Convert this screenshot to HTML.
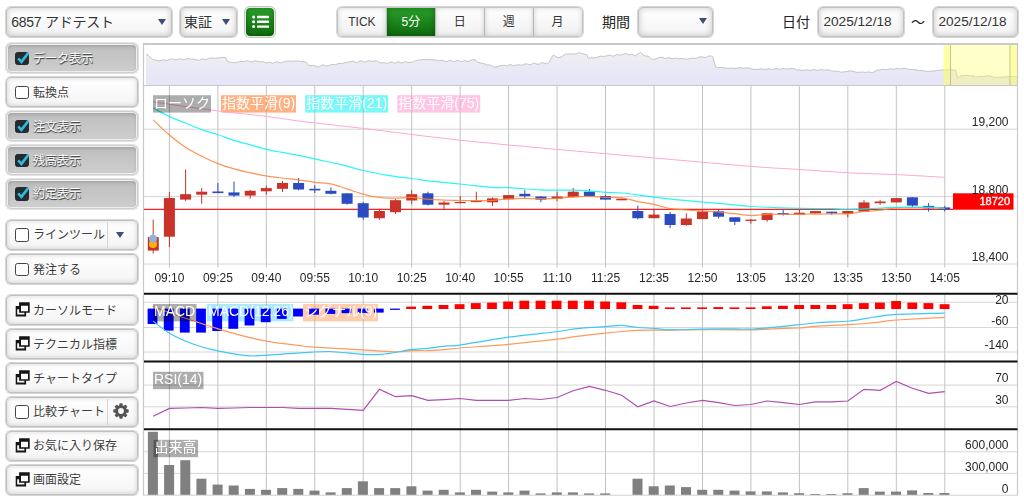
<!DOCTYPE html><html lang="ja"><head><meta charset="utf-8"><title>チャート</title><style>
html,body{margin:0;padding:0;background:#fff}
body{width:1024px;height:499px;position:relative;overflow:hidden;font-family:"Liberation Sans","Noto Sans CJK JP",sans-serif;color:#333;font-size:14px}
.bx{position:absolute;box-sizing:border-box;border:1px solid #c0c0c0;border-radius:5px;background:linear-gradient(#ffffff,#f4f4f4);box-shadow:0 0 0 1px #d6d6d6,inset 0 0 5px rgba(0,0,0,.17);text-shadow:0 1px 0 #fff;white-space:nowrap}
.top{top:7px;height:30px;line-height:28px;font-size:14px;box-shadow:0 0 0 1px #d6d6d6,inset 0 0 6px rgba(0,0,0,.22)}
.arr{position:absolute;width:0;height:0;border-left:4.5px solid transparent;border-right:4.5px solid transparent;border-top:6px solid #3c4f76;top:11px}
.lbl{position:absolute;top:6.5px;line-height:30px;font-size:14px;color:#222}
.sb{left:6px;width:131.5px;height:30px;line-height:28px;font-size:12px;color:#3c3c3c}
.sb .t{position:absolute;left:26px;top:0.5px}
.sb.on{background:linear-gradient(#bebebe,#cecece);border-color:#cfcfcf;box-shadow:0 0 0 1px #e2e2e2,inset 0 0 0 1px #eeeeee,inset 0 2px 4px rgba(0,0,0,.18);color:#fff;text-shadow:0 1px 1px #444, 1px 1px 0 #666}
.cb{position:absolute;left:8.3px;top:7.6px;width:13.6px;height:13.6px;box-sizing:border-box;border:1.4px solid #444;border-radius:2.5px;background:#fff}
.on .cb{background:#262b30;border-color:#262b30}
.ic{position:absolute;left:8px;top:6px}
.sep{position:absolute;top:1px;bottom:1px;width:1px;background:#d4d4d4}
.seg{position:absolute;top:7px;left:337px;width:245.5px;height:30px;box-sizing:border-box;border:1px solid #c6c6c6;border-radius:5px;box-shadow:0 0 0 1px #d6d6d6;overflow:hidden;display:flex;font-size:12px;text-shadow:0 1px 0 #fff}
.seg div{flex:1;text-align:center;line-height:28px;border-right:1px solid #b9b9b9;background:linear-gradient(#ffffff,#f0f0f0);box-shadow:inset 0 0 5px rgba(0,0,0,.18)}
.seg div:last-child{border-right:0}
.seg div.act{background:linear-gradient(#2aa12a,#0e6a0e);color:#fff;text-shadow:none;box-shadow:inset 0 0 6px rgba(0,60,0,.5)}
</style></head><body>
<div class="bx top" style="left:6px;width:165.5px"><span style="position:absolute;left:4.2px;letter-spacing:-0.25px">6857 アドテスト</span><span class="arr" style="left:150.5px"></span></div>
<div class="bx top" style="left:179.5px;width:57.5px"><span style="position:absolute;left:3.6px">東証</span><span class="arr" style="left:41.5px"></span></div>
<div class="bx" style="left:245px;top:7px;width:29.5px;height:29.5px;background:linear-gradient(#2aa12a,#0e6a0e);border-color:#dfe8df;box-shadow:0 0 0 1px #c4c4c4,inset 0 0 5px rgba(0,60,0,.45)"><svg width="28" height="28" viewBox="0 0 28 28" style="position:absolute;left:0;top:0"><g fill="#fff"><circle cx="7.6" cy="9" r="1.5"/><circle cx="7.6" cy="13.8" r="1.5"/><circle cx="7.6" cy="18.6" r="1.5"/><rect x="11" y="7.8" width="12" height="2.4" rx=".6"/><rect x="11" y="12.6" width="12" height="2.4" rx=".6"/><rect x="11" y="17.4" width="12" height="2.4" rx=".6"/></g></svg></div>
<div class="seg"><div>TICK</div><div class="act">5分</div><div>日</div><div>週</div><div>月</div></div>
<div class="lbl" style="left:602px">期間</div>
<div class="bx top" style="left:637.5px;width:75.5px"><span class="arr" style="left:60px;top:9.7px"></span></div>
<div class="lbl" style="left:782px">日付</div>
<div class="bx top" style="left:817.5px;width:86px"><span style="position:absolute;left:5px;font-size:13.6px">2025/12/18</span></div>
<div class="lbl" style="left:911px">～</div>
<div class="bx top" style="left:932.5px;width:85.5px"><span style="position:absolute;left:5px;font-size:13.6px">2025/12/18</span></div>
<div class="bx sb on" style="top:43px"><span class="cb"></span><svg style="position:absolute;left:8.3px;top:5.8px" width="16" height="16" viewBox="0 0 16 16"><path d="M3.2 8.4L6.4 11.9L13.4 2.9" fill="none" stroke="#2fb9dc" stroke-width="2.6" stroke-linecap="butt"/></svg><span class="t">データ表示</span></div>
<div class="bx sb" style="top:77px"><span class="cb"></span><span class="t">転換点</span></div>
<div class="bx sb on" style="top:111px"><span class="cb"></span><svg style="position:absolute;left:8.3px;top:5.8px" width="16" height="16" viewBox="0 0 16 16"><path d="M3.2 8.4L6.4 11.9L13.4 2.9" fill="none" stroke="#2fb9dc" stroke-width="2.6" stroke-linecap="butt"/></svg><span class="t">注文表示</span></div>
<div class="bx sb on" style="top:145px"><span class="cb"></span><svg style="position:absolute;left:8.3px;top:5.8px" width="16" height="16" viewBox="0 0 16 16"><path d="M3.2 8.4L6.4 11.9L13.4 2.9" fill="none" stroke="#2fb9dc" stroke-width="2.6" stroke-linecap="butt"/></svg><span class="t">残高表示</span></div>
<div class="bx sb on" style="top:178.5px"><span class="cb"></span><svg style="position:absolute;left:8.3px;top:5.8px" width="16" height="16" viewBox="0 0 16 16"><path d="M3.2 8.4L6.4 11.9L13.4 2.9" fill="none" stroke="#2fb9dc" stroke-width="2.6" stroke-linecap="butt"/></svg><span class="t">約定表示</span></div>
<div class="bx sb" style="top:219.7px"><span class="cb"></span><span class="t">ラインツール</span><span class="sep" style="left:99.5px"></span><span class="arr" style="left:108.8px;top:11.3px;border-left-width:4.8px;border-right-width:4.8px;border-top-width:6.8px"></span></div>
<div class="bx sb" style="top:254px"><span class="cb"></span><span class="t">発注する</span></div>
<div class="bx sb" style="top:295px"><svg class="ic" width="15" height="16" viewBox="0 0 15 16"><path fill="#151515" fill-rule="evenodd" d="M4.1 0.3H14.7V10.7H4.1ZM6 3.7V9.2H13V3.7ZM0.7 3.9H4.1V10.7H11.1V14.5H0.7ZM2.2 7.3V12.6H9.4V10.7H4.1V7.3Z"/></svg><span class="t">カーソルモード</span></div>
<div class="bx sb" style="top:329px"><svg class="ic" width="15" height="16" viewBox="0 0 15 16"><path fill="#151515" fill-rule="evenodd" d="M4.1 0.3H14.7V10.7H4.1ZM6 3.7V9.2H13V3.7ZM0.7 3.9H4.1V10.7H11.1V14.5H0.7ZM2.2 7.3V12.6H9.4V10.7H4.1V7.3Z"/></svg><span class="t">テクニカル指標</span></div>
<div class="bx sb" style="top:363px"><svg class="ic" width="15" height="16" viewBox="0 0 15 16"><path fill="#151515" fill-rule="evenodd" d="M4.1 0.3H14.7V10.7H4.1ZM6 3.7V9.2H13V3.7ZM0.7 3.9H4.1V10.7H11.1V14.5H0.7ZM2.2 7.3V12.6H9.4V10.7H4.1V7.3Z"/></svg><span class="t">チャートタイプ</span></div>
<div class="bx sb" style="top:396.5px"><span class="cb"></span><span class="t">比較チャート</span><span class="sep" style="left:99.5px"></span><svg style="position:absolute;left:106.3px;top:5.6px" width="16" height="16" viewBox="-8 -8 16 16"><g fill="#555"><circle r="5.9"/><rect x="-1.65" y="-7.7" width="3.3" height="4" rx="0.8" transform="rotate(0)"/><rect x="-1.65" y="-7.7" width="3.3" height="4" rx="0.8" transform="rotate(45)"/><rect x="-1.65" y="-7.7" width="3.3" height="4" rx="0.8" transform="rotate(90)"/><rect x="-1.65" y="-7.7" width="3.3" height="4" rx="0.8" transform="rotate(135)"/><rect x="-1.65" y="-7.7" width="3.3" height="4" rx="0.8" transform="rotate(180)"/><rect x="-1.65" y="-7.7" width="3.3" height="4" rx="0.8" transform="rotate(225)"/><rect x="-1.65" y="-7.7" width="3.3" height="4" rx="0.8" transform="rotate(270)"/><rect x="-1.65" y="-7.7" width="3.3" height="4" rx="0.8" transform="rotate(315)"/></g><circle r="2.9" fill="#f7f7f7"/></svg></div>
<div class="bx sb" style="top:430.5px"><svg class="ic" width="15" height="16" viewBox="0 0 15 16"><path fill="#151515" fill-rule="evenodd" d="M4.1 0.3H14.7V10.7H4.1ZM6 3.7V9.2H13V3.7ZM0.7 3.9H4.1V10.7H11.1V14.5H0.7ZM2.2 7.3V12.6H9.4V10.7H4.1V7.3Z"/></svg><span class="t">お気に入り保存</span></div>
<div class="bx sb" style="top:464.5px"><svg class="ic" width="15" height="16" viewBox="0 0 15 16"><path fill="#151515" fill-rule="evenodd" d="M4.1 0.3H14.7V10.7H4.1ZM6 3.7V9.2H13V3.7ZM0.7 3.9H4.1V10.7H11.1V14.5H0.7ZM2.2 7.3V12.6H9.4V10.7H4.1V7.3Z"/></svg><span class="t">画面設定</span></div>
<svg id="chart" width="1024" height="499" viewBox="0 0 1024 499" style="position:absolute;left:0;top:0;will-change:transform" font-family="Liberation Sans, Noto Sans CJK JP, sans-serif">
<defs><linearGradient id="ng" gradientUnits="userSpaceOnUse" x1="0" y1="52" x2="0" y2="86"><stop offset="0" stop-color="#f0f0f1"/><stop offset="0.5" stop-color="#e9e9f6"/><stop offset="1" stop-color="#e5e5fa"/></linearGradient></defs>
<polygon points="146.0,54.4 148.3,55.3 150.7,57.8 153.0,59.6 156.0,60.4 159.0,61.0 161.5,60.2 164.0,59.7 166.5,60.7 169.0,59.6 171.4,58.7 173.7,59.6 176.1,60.1 178.5,58.9 180.8,58.9 183.2,59.8 185.6,59.2 188.0,58.6 190.3,59.2 192.7,59.0 197.0,60.0 199.3,60.3 201.6,59.0 203.9,59.0 206.1,59.7 208.4,58.5 210.7,57.9 213.0,58.2 215.6,58.3 218.1,57.8 220.7,57.6 223.2,57.4 225.8,57.6 227.0,61.0 229.3,62.2 231.5,62.0 233.8,62.9 236.7,62.3 239.6,61.7 242.5,61.4 244.9,61.6 247.3,60.5 249.7,61.7 252.1,62.0 254.4,60.9 256.8,61.1 259.2,62.0 261.6,61.4 264.6,62.4 267.5,62.9 269.8,62.2 272.1,63.4 274.4,62.6 276.7,61.6 279.0,62.7 281.3,62.7 283.6,62.0 286.5,61.1 289.4,61.0 291.8,61.3 294.3,61.1 296.7,60.9 299.1,61.1 301.6,61.8 304.0,61.4 306.2,62.6 308.5,64.9 310.9,65.8 313.4,65.2 315.8,66.4 318.2,67.0 320.7,65.7 323.1,64.8 325.5,65.9 328.0,65.7 330.4,64.9 332.8,64.4 335.1,64.9 337.5,63.8 339.8,63.3 342.2,63.4 345.1,62.8 348.0,62.0 350.4,61.9 352.8,61.0 355.2,62.2 357.6,62.3 360.0,60.8 362.4,61.2 364.8,62.2 367.2,61.1 369.6,60.6 372.0,61.5 374.4,61.0 376.6,60.9 378.8,62.1 381.0,63.0 383.2,62.9 385.5,62.8 387.7,63.6 390.0,62.1 392.2,62.2 394.5,63.4 396.7,62.2 399.0,61.7 401.2,63.1 403.5,62.4 405.7,61.3 408.0,62.6 410.2,62.5 412.5,62.0 415.4,60.7 418.3,60.0 420.6,60.1 423.0,59.6 425.3,59.6 427.7,59.8 430.0,59.5 432.4,59.6 434.9,59.8 437.3,60.7 439.7,60.8 442.2,60.2 444.6,61.1 446.9,61.8 449.1,60.6 451.4,60.7 453.7,61.8 456.0,60.9 458.2,60.5 460.5,61.6 462.8,61.2 465.1,60.5 467.3,61.4 469.6,61.1 472.5,59.6 475.1,59.9 477.6,62.1 480.1,62.8 482.7,63.4 484.9,63.9 487.1,65.1 489.4,64.8 491.6,65.6 493.8,67.1 496.0,67.0 498.9,66.0 501.8,65.5 504.1,65.3 506.4,65.9 508.7,65.0 511.1,64.7 513.4,65.6 515.7,65.1 518.0,64.9 520.4,65.0 522.7,65.2 525.1,63.9 527.4,64.0 529.8,64.9 532.2,63.8 534.5,63.1 536.9,64.3 539.3,64.0 541.6,62.5 544.0,63.3 546.3,63.9 548.7,62.9 553.0,55.2 555.2,56.1 557.5,57.6 560.0,57.4 562.6,56.2 565.2,54.3 567.7,54.0 570.3,54.0 573.0,53.9 575.6,54.1 578.3,52.8 580.9,53.2 583.8,54.1 586.8,54.6 588.2,58.2 590.7,57.8 593.2,57.9 595.7,57.5 598.3,57.0 600.8,56.2 603.3,56.4 605.8,56.1 608.1,55.6 610.4,55.0 612.7,56.2 615.1,55.4 617.4,54.2 619.7,55.2 622.0,54.6 624.5,53.7 627.0,53.9 629.5,54.9 632.0,54.0 635.0,56.1 637.7,54.1 640.4,52.6 642.9,54.5 645.3,56.0 647.8,56.1 650.2,57.9 652.7,59.6 655.6,58.8 658.5,57.6 660.8,57.3 663.0,57.5 665.3,58.5 667.5,57.9 669.8,57.8 672.0,58.6 674.3,58.4 676.5,58.1 678.8,58.8 681.0,58.7 683.3,58.6 685.5,59.1 687.8,59.0 690.2,58.4 692.7,58.1 695.1,58.5 697.6,57.8 700.0,56.6 702.5,57.0 705.0,57.7 707.6,56.4 710.2,55.9 712.7,56.4 715.7,67.2 718.1,67.6 720.5,67.5 722.9,67.4 725.2,68.1 727.6,68.3 730.0,68.2 732.5,68.1 735.0,68.5 737.5,68.0 739.9,67.6 742.4,68.1 744.9,68.1 747.4,67.8 750.3,68.6 753.3,69.3 755.6,69.3 757.9,69.6 760.1,68.9 762.4,69.0 764.7,69.6 767.0,69.0 769.2,68.7 771.5,69.4 773.8,69.1 776.1,68.6 778.4,69.1 780.6,69.2 782.9,68.5 785.2,68.8 787.5,69.2 789.7,68.5 792.0,68.6 794.3,68.7 797.2,70.2 799.5,69.7 801.7,70.3 804.0,70.4 806.2,69.7 808.5,70.1 810.7,70.5 813.0,69.7 815.2,69.8 817.5,70.4 819.7,69.8 822.0,69.7 824.2,70.2 826.5,69.9 829.0,69.9 831.4,70.8 833.9,71.4 836.3,71.1 838.8,71.6 841.2,72.2 844.1,71.9 847.1,71.5 850.0,70.8 852.9,71.2 855.8,72.2 858.0,72.3 860.2,72.2 862.4,72.0 864.6,72.4 866.8,72.2 869.0,71.9 871.2,72.5 873.4,72.2 877.8,69.9 880.1,70.0 882.3,69.2 884.6,69.5 886.9,69.8 889.1,68.9 891.4,68.9 893.6,69.4 895.9,68.7 898.2,68.3 900.4,68.9 902.7,68.4 905.2,68.3 907.6,69.1 910.0,69.7 912.5,69.3 915.0,69.7 917.4,70.2 919.7,70.5 922.0,70.4 924.4,71.1 926.7,71.4 929.0,71.4 931.5,71.1 933.9,71.0 936.4,70.7 938.8,70.4 941.2,70.0 943.7,69.9 946.1,70.2 948.4,69.7 950.8,69.7 953.1,70.2 955.5,69.9 957.5,78.1 959.9,75.7 962.5,76.0 965.1,75.3 967.8,75.5 970.4,76.0 973.0,75.7 976.0,77.2 978.3,76.8 980.7,76.3 983.0,76.6 985.4,76.1 987.7,75.7 990.6,76.2 993.6,77.1 996.5,77.5 998.7,77.4 1000.9,77.1 1003.1,77.1 1005.3,76.8 1007.5,76.7 1009.7,76.6 1012.1,76.6 1014.6,76.5 1017.0,76.6 1017,85.5 146,85.5" fill="url(#ng)"/>
<polyline points="146.0,54.4 148.3,55.3 150.7,57.8 153.0,59.6 156.0,60.4 159.0,61.0 161.5,60.2 164.0,59.7 166.5,60.7 169.0,59.6 171.4,58.7 173.7,59.6 176.1,60.1 178.5,58.9 180.8,58.9 183.2,59.8 185.6,59.2 188.0,58.6 190.3,59.2 192.7,59.0 197.0,60.0 199.3,60.3 201.6,59.0 203.9,59.0 206.1,59.7 208.4,58.5 210.7,57.9 213.0,58.2 215.6,58.3 218.1,57.8 220.7,57.6 223.2,57.4 225.8,57.6 227.0,61.0 229.3,62.2 231.5,62.0 233.8,62.9 236.7,62.3 239.6,61.7 242.5,61.4 244.9,61.6 247.3,60.5 249.7,61.7 252.1,62.0 254.4,60.9 256.8,61.1 259.2,62.0 261.6,61.4 264.6,62.4 267.5,62.9 269.8,62.2 272.1,63.4 274.4,62.6 276.7,61.6 279.0,62.7 281.3,62.7 283.6,62.0 286.5,61.1 289.4,61.0 291.8,61.3 294.3,61.1 296.7,60.9 299.1,61.1 301.6,61.8 304.0,61.4 306.2,62.6 308.5,64.9 310.9,65.8 313.4,65.2 315.8,66.4 318.2,67.0 320.7,65.7 323.1,64.8 325.5,65.9 328.0,65.7 330.4,64.9 332.8,64.4 335.1,64.9 337.5,63.8 339.8,63.3 342.2,63.4 345.1,62.8 348.0,62.0 350.4,61.9 352.8,61.0 355.2,62.2 357.6,62.3 360.0,60.8 362.4,61.2 364.8,62.2 367.2,61.1 369.6,60.6 372.0,61.5 374.4,61.0 376.6,60.9 378.8,62.1 381.0,63.0 383.2,62.9 385.5,62.8 387.7,63.6 390.0,62.1 392.2,62.2 394.5,63.4 396.7,62.2 399.0,61.7 401.2,63.1 403.5,62.4 405.7,61.3 408.0,62.6 410.2,62.5 412.5,62.0 415.4,60.7 418.3,60.0 420.6,60.1 423.0,59.6 425.3,59.6 427.7,59.8 430.0,59.5 432.4,59.6 434.9,59.8 437.3,60.7 439.7,60.8 442.2,60.2 444.6,61.1 446.9,61.8 449.1,60.6 451.4,60.7 453.7,61.8 456.0,60.9 458.2,60.5 460.5,61.6 462.8,61.2 465.1,60.5 467.3,61.4 469.6,61.1 472.5,59.6 475.1,59.9 477.6,62.1 480.1,62.8 482.7,63.4 484.9,63.9 487.1,65.1 489.4,64.8 491.6,65.6 493.8,67.1 496.0,67.0 498.9,66.0 501.8,65.5 504.1,65.3 506.4,65.9 508.7,65.0 511.1,64.7 513.4,65.6 515.7,65.1 518.0,64.9 520.4,65.0 522.7,65.2 525.1,63.9 527.4,64.0 529.8,64.9 532.2,63.8 534.5,63.1 536.9,64.3 539.3,64.0 541.6,62.5 544.0,63.3 546.3,63.9 548.7,62.9 553.0,55.2 555.2,56.1 557.5,57.6 560.0,57.4 562.6,56.2 565.2,54.3 567.7,54.0 570.3,54.0 573.0,53.9 575.6,54.1 578.3,52.8 580.9,53.2 583.8,54.1 586.8,54.6 588.2,58.2 590.7,57.8 593.2,57.9 595.7,57.5 598.3,57.0 600.8,56.2 603.3,56.4 605.8,56.1 608.1,55.6 610.4,55.0 612.7,56.2 615.1,55.4 617.4,54.2 619.7,55.2 622.0,54.6 624.5,53.7 627.0,53.9 629.5,54.9 632.0,54.0 635.0,56.1 637.7,54.1 640.4,52.6 642.9,54.5 645.3,56.0 647.8,56.1 650.2,57.9 652.7,59.6 655.6,58.8 658.5,57.6 660.8,57.3 663.0,57.5 665.3,58.5 667.5,57.9 669.8,57.8 672.0,58.6 674.3,58.4 676.5,58.1 678.8,58.8 681.0,58.7 683.3,58.6 685.5,59.1 687.8,59.0 690.2,58.4 692.7,58.1 695.1,58.5 697.6,57.8 700.0,56.6 702.5,57.0 705.0,57.7 707.6,56.4 710.2,55.9 712.7,56.4 715.7,67.2 718.1,67.6 720.5,67.5 722.9,67.4 725.2,68.1 727.6,68.3 730.0,68.2 732.5,68.1 735.0,68.5 737.5,68.0 739.9,67.6 742.4,68.1 744.9,68.1 747.4,67.8 750.3,68.6 753.3,69.3 755.6,69.3 757.9,69.6 760.1,68.9 762.4,69.0 764.7,69.6 767.0,69.0 769.2,68.7 771.5,69.4 773.8,69.1 776.1,68.6 778.4,69.1 780.6,69.2 782.9,68.5 785.2,68.8 787.5,69.2 789.7,68.5 792.0,68.6 794.3,68.7 797.2,70.2 799.5,69.7 801.7,70.3 804.0,70.4 806.2,69.7 808.5,70.1 810.7,70.5 813.0,69.7 815.2,69.8 817.5,70.4 819.7,69.8 822.0,69.7 824.2,70.2 826.5,69.9 829.0,69.9 831.4,70.8 833.9,71.4 836.3,71.1 838.8,71.6 841.2,72.2 844.1,71.9 847.1,71.5 850.0,70.8 852.9,71.2 855.8,72.2 858.0,72.3 860.2,72.2 862.4,72.0 864.6,72.4 866.8,72.2 869.0,71.9 871.2,72.5 873.4,72.2 877.8,69.9 880.1,70.0 882.3,69.2 884.6,69.5 886.9,69.8 889.1,68.9 891.4,68.9 893.6,69.4 895.9,68.7 898.2,68.3 900.4,68.9 902.7,68.4 905.2,68.3 907.6,69.1 910.0,69.7 912.5,69.3 915.0,69.7 917.4,70.2 919.7,70.5 922.0,70.4 924.4,71.1 926.7,71.4 929.0,71.4 931.5,71.1 933.9,71.0 936.4,70.7 938.8,70.4 941.2,70.0 943.7,69.9 946.1,70.2 948.4,69.7 950.8,69.7 953.1,70.2 955.5,69.9 957.5,78.1 959.9,75.7 962.5,76.0 965.1,75.3 967.8,75.5 970.4,76.0 973.0,75.7 976.0,77.2 978.3,76.8 980.7,76.3 983.0,76.6 985.4,76.1 987.7,75.7 990.6,76.2 993.6,77.1 996.5,77.5 998.7,77.4 1000.9,77.1 1003.1,77.1 1005.3,76.8 1007.5,76.7 1009.7,76.6 1012.1,76.6 1014.6,76.5 1017.0,76.6" fill="none" stroke="#c4c4c4" stroke-width="1"/>
<rect x="943.5" y="45" width="74" height="40.5" fill="#ffff55" fill-opacity="0.32"/>
<rect x="943.5" y="45" width="7" height="40.5" fill="#ffff55" fill-opacity="0.3"/>
<rect x="1010" y="45" width="7.5" height="40.5" fill="#ffff55" fill-opacity="0.3"/>
<path d="M950.5 44V85.5M1010 44V85.5" stroke="#c2c29a" stroke-width="1" fill="none"/>
<path d="M143 44H1018" stroke="#c9c9c9" stroke-width="2" fill="none"/>
<path d="M143.5 43V495.6" stroke="#c8c8c8" stroke-width="1.2" fill="none"/>
<path d="M1017.5 43V495.6" stroke="#c8c8c8" stroke-width="1.2" fill="none"/>
<path d="M143 85.5H1018" stroke="#c8c8c8" stroke-width="1.2" fill="none"/>
<path d="M144 129.2H1017M144 196.6H1017M144 264H1017M144 302.3H1017M144 327.5H1017M144 352H1017M144 385.1H1017M144 406.8H1017M144 451.8H1017M144 473.4H1017" stroke="#d6d6d6" stroke-width="1" fill="none"/>
<path d="M144 495.2H1017" stroke="#d0d0d0" stroke-width="1" fill="none"/>
<path d="M169.4 86V267.5M169.4 295V495M217.9 86V267.5M217.9 295V495M266.3 86V267.5M266.3 295V495M314.8 86V267.5M314.8 295V495M363.2 86V267.5M363.2 295V495M411.7 86V267.5M411.7 295V495M460.2 86V267.5M460.2 295V495M508.6 86V267.5M508.6 295V495M557.1 86V267.5M557.1 295V495M605.5 86V267.5M605.5 295V495M654.0 86V267.5M654.0 295V495M702.5 86V267.5M702.5 295V495M750.9 86V267.5M750.9 295V495M799.4 86V267.5M799.4 295V495M847.8 86V267.5M847.8 295V495M896.3 86V267.5M896.3 295V495M944.8 86V267.5M944.8 295V495" stroke="#c2c2c2" stroke-width="1" fill="none"/>
<rect x="221" y="95.2" width="75" height="17.4" fill="#ff8f4a" fill-opacity="0.7"/>
<rect x="305.2" y="95.2" width="83" height="17.4" fill="#22f2f2" fill-opacity="0.6"/>
<rect x="397.3" y="95.2" width="83" height="17.4" fill="#ff9fd0" fill-opacity="0.6"/>
<rect x="207" y="304" width="86.5" height="17.4" fill="#3cc8f5" fill-opacity="0.42"/>
<rect x="303" y="304" width="75" height="17.4" fill="#ff9a5c" fill-opacity="0.5"/>
<rect x="147.9" y="431.8" width="10" height="63.0" fill="#808080"/>
<rect x="164.1" y="465" width="10" height="29.8" fill="#808080"/>
<rect x="180.3" y="460.2" width="10" height="34.6" fill="#808080"/>
<rect x="196.4" y="478.7" width="10" height="16.1" fill="#808080"/>
<rect x="212.6" y="484.6" width="10" height="10.2" fill="#808080"/>
<rect x="228.7" y="485.5" width="10" height="9.3" fill="#808080"/>
<rect x="244.9" y="488.9" width="10" height="5.9" fill="#808080"/>
<rect x="261.0" y="489.8" width="10" height="5.0" fill="#808080"/>
<rect x="277.2" y="488.1" width="10" height="6.7" fill="#808080"/>
<rect x="293.3" y="488.9" width="10" height="5.9" fill="#808080"/>
<rect x="309.5" y="490.6" width="10" height="4.2" fill="#808080"/>
<rect x="325.6" y="492.4" width="10" height="2.4" fill="#808080"/>
<rect x="341.8" y="488.1" width="10" height="6.7" fill="#808080"/>
<rect x="357.9" y="481.3" width="10" height="13.5" fill="#808080"/>
<rect x="374.1" y="488.1" width="10" height="6.7" fill="#808080"/>
<rect x="390.2" y="488.1" width="10" height="6.7" fill="#808080"/>
<rect x="406.4" y="486.3" width="10" height="8.5" fill="#808080"/>
<rect x="422.6" y="490.6" width="10" height="4.2" fill="#808080"/>
<rect x="438.7" y="489.8" width="10" height="5.0" fill="#808080"/>
<rect x="454.9" y="492.4" width="10" height="2.4" fill="#808080"/>
<rect x="471.0" y="489.8" width="10" height="5.0" fill="#808080"/>
<rect x="487.2" y="491.6" width="10" height="3.2" fill="#808080"/>
<rect x="503.3" y="492.4" width="10" height="2.4" fill="#808080"/>
<rect x="519.5" y="490.6" width="10" height="4.2" fill="#808080"/>
<rect x="535.6" y="493.4" width="10" height="1.4" fill="#808080"/>
<rect x="551.8" y="492.4" width="10" height="2.4" fill="#808080"/>
<rect x="567.9" y="492.4" width="10" height="2.4" fill="#808080"/>
<rect x="584.1" y="493.4" width="10" height="1.4" fill="#808080"/>
<rect x="600.2" y="493.4" width="10" height="1.4" fill="#808080"/>
<rect x="632.5" y="478.7" width="10" height="16.1" fill="#808080"/>
<rect x="648.7" y="486.3" width="10" height="8.5" fill="#808080"/>
<rect x="664.8" y="485.5" width="10" height="9.3" fill="#808080"/>
<rect x="681.0" y="487.1" width="10" height="7.7" fill="#808080"/>
<rect x="697.2" y="489.8" width="10" height="5.0" fill="#808080"/>
<rect x="713.3" y="489.8" width="10" height="5.0" fill="#808080"/>
<rect x="729.5" y="490.6" width="10" height="4.2" fill="#808080"/>
<rect x="745.6" y="491.4" width="10" height="3.4" fill="#808080"/>
<rect x="761.8" y="491.4" width="10" height="3.4" fill="#808080"/>
<rect x="777.9" y="492.4" width="10" height="2.4" fill="#808080"/>
<rect x="794.1" y="493.2" width="10" height="1.6" fill="#808080"/>
<rect x="810.2" y="494" width="10" height="0.8" fill="#808080"/>
<rect x="826.4" y="494" width="10" height="0.8" fill="#808080"/>
<rect x="842.5" y="493.2" width="10" height="1.6" fill="#808080"/>
<rect x="858.7" y="488.1" width="10" height="6.7" fill="#808080"/>
<rect x="874.8" y="491.6" width="10" height="3.2" fill="#808080"/>
<rect x="891.0" y="491.6" width="10" height="3.2" fill="#808080"/>
<rect x="907.1" y="490.4" width="10" height="4.4" fill="#808080"/>
<rect x="923.3" y="493" width="10" height="1.8" fill="#808080"/>
<rect x="939.4" y="493" width="10" height="1.8" fill="#808080"/>
<rect x="147.6" y="308.6" width="9.8" height="15.4" fill="#0000ff"/>
<rect x="163.8" y="308.6" width="9.8" height="22.0" fill="#0000ff"/>
<rect x="179.9" y="308.6" width="9.8" height="24.0" fill="#0000ff"/>
<rect x="196.1" y="308.6" width="9.8" height="24.0" fill="#0000ff"/>
<rect x="212.3" y="308.6" width="9.8" height="22.4" fill="#0000ff"/>
<rect x="228.4" y="308.6" width="9.8" height="20.2" fill="#0000ff"/>
<rect x="244.6" y="308.6" width="9.8" height="16.9" fill="#0000ff"/>
<rect x="260.8" y="308.6" width="9.8" height="13.6" fill="#0000ff"/>
<rect x="276.9" y="308.6" width="9.8" height="10.3" fill="#0000ff"/>
<rect x="293.1" y="308.6" width="9.8" height="7.9" fill="#0000ff"/>
<rect x="309.2" y="308.6" width="9.8" height="6.1" fill="#0000ff"/>
<rect x="325.4" y="308.6" width="9.8" height="5.3" fill="#0000ff"/>
<rect x="341.6" y="308.6" width="9.8" height="4.6" fill="#0000ff"/>
<rect x="357.7" y="308.6" width="9.8" height="4.3" fill="#0000ff"/>
<rect x="373.9" y="308.6" width="9.8" height="4.0" fill="#0000ff"/>
<rect x="390.1" y="308.6" width="9.8" height="1.3" fill="#0000ff"/>
<rect x="406.2" y="306.6" width="9.8" height="2.4" fill="#ff0000"/>
<rect x="422.4" y="305.8" width="9.8" height="3.2" fill="#ff0000"/>
<rect x="438.6" y="305" width="9.8" height="4.0" fill="#ff0000"/>
<rect x="454.7" y="304.2" width="9.8" height="4.8" fill="#ff0000"/>
<rect x="470.9" y="303.1" width="9.8" height="5.9" fill="#ff0000"/>
<rect x="487.1" y="302.6" width="9.8" height="6.4" fill="#ff0000"/>
<rect x="503.2" y="301.5" width="9.8" height="7.5" fill="#ff0000"/>
<rect x="519.4" y="300.7" width="9.8" height="8.3" fill="#ff0000"/>
<rect x="535.6" y="300.7" width="9.8" height="8.3" fill="#ff0000"/>
<rect x="551.7" y="300.7" width="9.8" height="8.3" fill="#ff0000"/>
<rect x="567.9" y="300.7" width="9.8" height="8.3" fill="#ff0000"/>
<rect x="584.1" y="300.7" width="9.8" height="8.3" fill="#ff0000"/>
<rect x="600.2" y="301.5" width="9.8" height="7.5" fill="#ff0000"/>
<rect x="616.4" y="302.3" width="9.8" height="6.7" fill="#ff0000"/>
<rect x="632.6" y="305" width="9.8" height="4.0" fill="#ff0000"/>
<rect x="648.7" y="305.8" width="9.8" height="3.2" fill="#ff0000"/>
<rect x="664.9" y="307.4" width="9.8" height="1.6" fill="#ff0000"/>
<rect x="681.0" y="307.4" width="9.8" height="1.6" fill="#ff0000"/>
<rect x="697.2" y="307.4" width="9.8" height="1.6" fill="#ff0000"/>
<rect x="713.4" y="307.1" width="9.8" height="1.9" fill="#ff0000"/>
<rect x="729.5" y="307.4" width="9.8" height="1.6" fill="#ff0000"/>
<rect x="745.7" y="307.4" width="9.8" height="1.6" fill="#ff0000"/>
<rect x="761.9" y="306.3" width="9.8" height="2.7" fill="#ff0000"/>
<rect x="778.0" y="305.8" width="9.8" height="3.2" fill="#ff0000"/>
<rect x="794.2" y="305" width="9.8" height="4.0" fill="#ff0000"/>
<rect x="810.4" y="305" width="9.8" height="4.0" fill="#ff0000"/>
<rect x="826.5" y="305" width="9.8" height="4.0" fill="#ff0000"/>
<rect x="842.7" y="304.2" width="9.8" height="4.8" fill="#ff0000"/>
<rect x="858.9" y="303.1" width="9.8" height="5.9" fill="#ff0000"/>
<rect x="875.0" y="302.6" width="9.8" height="6.4" fill="#ff0000"/>
<rect x="891.2" y="301" width="9.8" height="8.0" fill="#ff0000"/>
<rect x="907.4" y="302.6" width="9.8" height="6.4" fill="#ff0000"/>
<rect x="923.5" y="303.1" width="9.8" height="5.9" fill="#ff0000"/>
<rect x="939.7" y="304.2" width="9.8" height="4.8" fill="#ff0000"/>
<path d="M153.0 306.0C155.2 306.9 164.0 310.7 169.4 312.7C174.8 314.7 187.2 318.9 193.7 321.0C200.2 323.1 210.5 326.6 218.0 328.8C225.5 331.0 242.3 335.7 249.9 337.6C257.5 339.5 268.1 341.6 275.2 342.7C282.3 343.8 297.8 345.4 303.0 346.0C308.2 346.6 306.4 346.7 314.3 347.2C322.2 347.7 351.5 349.3 362.4 349.9C373.3 350.5 389.4 351.8 396.0 351.9C402.6 352.0 407.7 350.9 412.0 350.7C416.3 350.5 423.3 350.9 428.0 350.7C432.7 350.5 442.7 349.8 447.0 349.4C451.3 349.0 451.7 348.7 459.9 348.0C468.1 347.3 495.8 345.5 508.8 344.3C521.8 343.1 548.9 340.2 557.7 339.2C566.5 338.2 570.6 337.2 575.0 336.6C579.4 336.0 586.9 335.2 591.0 334.7C595.1 334.2 601.4 333.5 605.5 333.1C609.6 332.7 617.2 331.9 621.5 331.5C625.8 331.1 633.2 330.6 637.5 330.4C641.8 330.2 649.3 330.2 653.6 330.2C657.9 330.2 663.2 330.3 669.6 330.2C676.0 330.1 693.0 329.6 701.7 329.6C710.4 329.6 728.4 329.9 735.0 329.9C741.6 329.9 744.6 330.1 751.0 329.9C757.4 329.7 776.6 328.6 783.0 328.3C789.4 328.0 794.7 328.3 799.0 328.0C803.3 327.7 808.5 326.9 815.2 326.4C821.9 325.9 842.1 325.0 848.9 324.6C855.7 324.2 862.5 323.8 866.5 323.5C870.5 323.2 874.9 322.7 879.0 322.2C883.1 321.7 888.1 320.6 896.9 320.0C905.7 319.4 938.3 317.7 944.7 317.4" fill="none" stroke="#ff9a5c" stroke-width="1.2"/>
<path d="M153.0 321.0C155.2 322.6 164.0 330.1 169.4 333.2C174.8 336.3 187.2 341.9 193.7 344.3C200.2 346.7 210.5 349.4 218.0 350.9C225.5 352.4 242.3 355.4 249.9 355.9C257.5 356.4 267.9 355.0 275.0 354.6C282.1 354.2 295.7 353.0 303.0 352.6C310.3 352.2 321.6 351.3 329.5 351.5C337.4 351.7 355.5 353.9 362.4 354.3C369.3 354.7 376.9 354.6 381.6 354.3C386.3 354.0 393.5 352.7 397.6 352.0C401.7 351.3 407.9 349.9 412.0 349.4C416.1 348.9 423.3 348.8 428.0 348.3C432.7 347.8 442.7 346.3 447.0 345.9C451.3 345.5 451.7 346.3 459.9 345.1C468.1 343.9 495.8 338.9 508.8 337.1C521.8 335.3 548.9 332.6 557.7 331.5C566.5 330.4 570.6 329.3 575.0 328.8C579.4 328.3 586.9 327.8 591.0 327.5C595.1 327.2 601.4 327.0 605.5 326.7C609.6 326.4 617.2 325.3 621.5 325.4C625.8 325.5 633.2 327.1 637.5 327.5C641.8 327.9 649.3 328.0 653.6 328.3C657.9 328.6 663.2 329.8 669.6 329.9C676.0 330.0 693.0 329.2 701.7 329.1C710.4 329.0 728.4 328.8 735.0 328.8C741.6 328.8 744.6 329.4 751.0 329.1C757.4 328.8 774.4 327.2 783.0 326.4C791.6 325.6 806.4 323.7 815.2 323.0C824.0 322.3 842.1 321.6 848.9 321.0C855.7 320.4 862.5 318.9 866.5 318.3C870.5 317.7 874.9 316.8 879.0 316.3C883.1 315.8 888.1 314.7 896.9 314.3C905.7 313.9 938.3 313.3 944.7 313.1" fill="none" stroke="#3cc8f5" stroke-width="1.2"/>
<polyline points="153.2,416.2 169.4,408.4 185.6,408.0 201.7,407.5 217.9,408.4 234.0,408.0 250.2,407.5 266.3,407.5 282.5,407.5 298.6,408.4 314.8,408.4 330.9,408.4 347.1,409.4 363.2,410.4 379.4,389.3 395.5,396.7 411.7,395.7 427.9,400.4 444.0,399.6 460.2,398.5 476.3,400.4 492.5,400.4 508.6,400.4 524.8,398.5 540.9,399.5 557.1,397.5 573.2,390.7 589.4,386.4 605.5,390.3 621.7,395.2 637.8,406.9 654.0,401.0 670.1,406.5 686.3,403.0 702.5,400.4 718.6,402.6 734.8,405.5 750.9,404.5 767.1,401.0 783.2,402.6 799.4,404.5 815.5,401.8 831.7,401.8 847.8,401.0 864.0,389.3 880.1,390.3 896.3,381.5 912.4,388.3 928.6,393.4 944.7,391.7" fill="none" stroke="#b04db0" stroke-width="1.2"/>
<path d="M144 293.75H1017.5M144 361.6H1017.5M144 429.3H1017.5" stroke="#111" stroke-width="2" fill="none"/>
<path d="M144 209.3H953" stroke="#ff2020" stroke-width="1.2" fill="none"/>
<path d="M153.2 219.6V253.7" stroke="#c9332a" stroke-width="1"/>
<rect x="147.8" y="237.1" width="11" height="13.5" fill="#c9332a"/>
<path d="M169.4 192V247" stroke="#c9332a" stroke-width="1"/>
<rect x="163.9" y="198" width="11" height="38.7" fill="#c9332a"/>
<path d="M185.6 169.5V201" stroke="#c9332a" stroke-width="1"/>
<rect x="180.1" y="194.2" width="11" height="5.4" fill="#c9332a"/>
<path d="M201.7 188V203.8" stroke="#c9332a" stroke-width="1"/>
<rect x="196.2" y="191.7" width="11" height="3.0" fill="#c9332a"/>
<path d="M217.9 183V193.1" stroke="#2b4bbf" stroke-width="1"/>
<rect x="212.4" y="191.5" width="11" height="1.6" fill="#2b4bbf"/>
<path d="M234.0 181.6V197" stroke="#2b4bbf" stroke-width="1"/>
<rect x="228.5" y="192.4" width="11" height="3.2" fill="#2b4bbf"/>
<path d="M250.2 189.9V198.7" stroke="#c9332a" stroke-width="1"/>
<rect x="244.7" y="190.8" width="11" height="4.8" fill="#c9332a"/>
<path d="M266.3 185.7V194.7" stroke="#c9332a" stroke-width="1"/>
<rect x="260.8" y="188.1" width="11" height="3.2" fill="#c9332a"/>
<path d="M282.5 180.9V192" stroke="#c9332a" stroke-width="1"/>
<rect x="277.0" y="183" width="11" height="5.8" fill="#c9332a"/>
<path d="M298.6 178V190.2" stroke="#2b4bbf" stroke-width="1"/>
<rect x="293.1" y="183" width="11" height="6.5" fill="#2b4bbf"/>
<path d="M314.8 185.2V193" stroke="#2b4bbf" stroke-width="1"/>
<rect x="309.3" y="188.8" width="11" height="1.6" fill="#2b4bbf"/>
<path d="M330.9 187.5V194.4" stroke="#2b4bbf" stroke-width="1"/>
<rect x="325.4" y="190.8" width="11" height="3.0" fill="#2b4bbf"/>
<path d="M347.1 193.3V204.7" stroke="#2b4bbf" stroke-width="1"/>
<rect x="341.6" y="193.3" width="11" height="10.5" fill="#2b4bbf"/>
<path d="M363.2 202V219.6" stroke="#2b4bbf" stroke-width="1"/>
<rect x="357.7" y="203.2" width="11" height="14.3" fill="#2b4bbf"/>
<path d="M379.4 210V219.8" stroke="#c9332a" stroke-width="1"/>
<rect x="373.9" y="211" width="11" height="7.2" fill="#c9332a"/>
<path d="M395.5 198.9V214" stroke="#c9332a" stroke-width="1"/>
<rect x="390.0" y="200.2" width="11" height="12.0" fill="#c9332a"/>
<path d="M411.7 190.2V204.3" stroke="#c9332a" stroke-width="1"/>
<rect x="406.2" y="194.2" width="11" height="6.3" fill="#c9332a"/>
<path d="M427.9 191.7V205.6" stroke="#2b4bbf" stroke-width="1"/>
<rect x="422.4" y="193.3" width="11" height="11.4" fill="#2b4bbf"/>
<path d="M444.0 201V210" stroke="#c9332a" stroke-width="1"/>
<rect x="438.5" y="202.5" width="11" height="2.2" fill="#c9332a"/>
<path d="M460.2 196V203.2" stroke="#c9332a" stroke-width="1"/>
<rect x="454.7" y="202" width="11" height="1.2" fill="#c9332a"/>
<path d="M476.3 191.7V202.1" stroke="#c9332a" stroke-width="1"/>
<rect x="470.8" y="200.7" width="11" height="1.4" fill="#c9332a"/>
<path d="M492.5 197.5V206" stroke="#c9332a" stroke-width="1"/>
<rect x="487.0" y="198.4" width="11" height="3.9" fill="#c9332a"/>
<path d="M508.6 195.1V199.3" stroke="#c9332a" stroke-width="1"/>
<rect x="503.1" y="195.1" width="11" height="4.2" fill="#c9332a"/>
<path d="M524.8 189.9V198.4" stroke="#2b4bbf" stroke-width="1"/>
<rect x="519.3" y="193.8" width="11" height="2.4" fill="#2b4bbf"/>
<path d="M540.9 196V202" stroke="#2b4bbf" stroke-width="1"/>
<rect x="535.4" y="196.5" width="11" height="3.1" fill="#2b4bbf"/>
<path d="M557.1 191.7V201" stroke="#c9332a" stroke-width="1"/>
<rect x="551.6" y="196.5" width="11" height="2.2" fill="#c9332a"/>
<path d="M573.2 188V197.8" stroke="#c9332a" stroke-width="1"/>
<rect x="567.7" y="191.7" width="11" height="5.4" fill="#c9332a"/>
<path d="M589.4 189V196.2" stroke="#2b4bbf" stroke-width="1"/>
<rect x="583.9" y="191.7" width="11" height="4.5" fill="#2b4bbf"/>
<path d="M605.5 194.7V199.6" stroke="#2b4bbf" stroke-width="1"/>
<rect x="600.0" y="196" width="11" height="3.6" fill="#2b4bbf"/>
<path d="M621.7 198.7V200.3" stroke="#c9332a" stroke-width="1"/>
<rect x="616.2" y="198.7" width="11" height="1.6" fill="#c9332a"/>
<path d="M637.8 205.6V219.4" stroke="#2b4bbf" stroke-width="1"/>
<rect x="632.3" y="211" width="11" height="7.2" fill="#2b4bbf"/>
<path d="M654.0 210V218.2" stroke="#c9332a" stroke-width="1"/>
<rect x="648.5" y="214.6" width="11" height="3.6" fill="#c9332a"/>
<path d="M670.1 211.9V228.1" stroke="#2b4bbf" stroke-width="1"/>
<rect x="664.6" y="214" width="11" height="11.0" fill="#2b4bbf"/>
<path d="M686.3 213.3V225.8" stroke="#c9332a" stroke-width="1"/>
<rect x="680.8" y="218.5" width="11" height="6.5" fill="#c9332a"/>
<path d="M702.5 210V219.1" stroke="#c9332a" stroke-width="1"/>
<rect x="697.0" y="211.5" width="11" height="7.6" fill="#c9332a"/>
<path d="M718.6 209.7V218.5" stroke="#2b4bbf" stroke-width="1"/>
<rect x="713.1" y="211.3" width="11" height="5.4" fill="#2b4bbf"/>
<path d="M734.8 217.3V225" stroke="#2b4bbf" stroke-width="1"/>
<rect x="729.3" y="217.3" width="11" height="4.5" fill="#2b4bbf"/>
<path d="M750.9 219V223.6" stroke="#c9332a" stroke-width="1"/>
<rect x="745.4" y="219.6" width="11" height="1.3" fill="#c9332a"/>
<path d="M767.1 213.3V221.8" stroke="#c9332a" stroke-width="1"/>
<rect x="761.6" y="213.3" width="11" height="6.7" fill="#c9332a"/>
<path d="M783.2 209.8V215.6" stroke="#2b4bbf" stroke-width="1"/>
<rect x="777.7" y="213.1" width="11" height="1.3" fill="#2b4bbf"/>
<path d="M799.4 210V214.45" stroke="#c9332a" stroke-width="1"/>
<rect x="793.9" y="212.7" width="11" height="1.8" fill="#c9332a"/>
<path d="M815.5 211.1V213.4" stroke="#c9332a" stroke-width="1"/>
<rect x="810.0" y="211.1" width="11" height="2.3" fill="#c9332a"/>
<path d="M831.7 211.7V214.8" stroke="#2b4bbf" stroke-width="1"/>
<rect x="826.2" y="211.7" width="11" height="1.6" fill="#2b4bbf"/>
<path d="M847.8 211V217.3" stroke="#c9332a" stroke-width="1"/>
<rect x="842.3" y="211" width="11" height="2.8" fill="#c9332a"/>
<path d="M864.0 200.1V211.6" stroke="#c9332a" stroke-width="1"/>
<rect x="858.5" y="202.4" width="11" height="9.2" fill="#c9332a"/>
<path d="M880.1 200.1V204.8" stroke="#c9332a" stroke-width="1"/>
<rect x="874.6" y="201.5" width="11" height="1.7" fill="#c9332a"/>
<path d="M896.3 198.1V202.4" stroke="#c9332a" stroke-width="1"/>
<rect x="890.8" y="198.1" width="11" height="4.3" fill="#c9332a"/>
<path d="M912.4 197.3V206.8" stroke="#2b4bbf" stroke-width="1"/>
<rect x="906.9" y="197.3" width="11" height="8.3" fill="#2b4bbf"/>
<path d="M928.6 203.1V211.6" stroke="#2b4bbf" stroke-width="1"/>
<rect x="923.1" y="205.9" width="11" height="2.5" fill="#2b4bbf"/>
<path d="M944.7 205.9V211.4" stroke="#2b4bbf" stroke-width="1"/>
<rect x="939.2" y="207.4" width="11" height="2.0" fill="#2b4bbf"/>
<path d="M153.2 101.9C164.0 103.4 198.8 108.5 217.5 110.9C236.2 113.3 251.4 114.5 265.7 116.3C279.9 118.1 286.8 119.5 303.0 121.5C319.2 123.5 336.8 125.3 363.0 128.4C389.2 131.5 427.7 136.7 460.0 140.2C492.3 143.7 524.5 146.4 556.8 149.4C589.1 152.4 621.3 155.1 653.6 157.9C685.9 160.7 726.5 164.5 750.8 166.4C775.1 168.3 783.2 168.4 799.5 169.5C815.8 170.6 832.3 172.0 848.4 172.8C864.5 173.7 880.0 173.8 896.0 174.6C912.0 175.3 936.6 176.9 944.7 177.3" fill="none" stroke="#ffa6d4" stroke-width="1"/>
<path d="M153.2 119.9C155.9 122.4 164.0 130.4 169.4 135.0C174.8 139.6 180.1 143.8 185.5 147.3C190.9 150.9 196.3 153.6 201.7 156.3C207.1 159.0 212.7 161.6 217.9 163.7C223.2 165.8 227.9 167.1 233.2 168.6C238.4 170.1 244.0 171.4 249.4 172.6C254.8 173.8 260.3 175.0 265.7 175.9C271.1 176.8 276.5 177.3 281.9 178.0C287.3 178.7 292.6 179.1 298.0 179.8C303.4 180.5 309.2 181.7 314.4 182.3C319.5 182.9 324.6 182.9 328.9 183.6C333.2 184.3 336.0 185.3 340.0 186.5C344.0 187.7 349.0 189.7 352.9 191.0C356.8 192.3 360.1 193.2 363.3 194.1C366.5 195.0 368.5 195.8 372.1 196.4C375.7 197.1 381.0 197.7 385.0 198.0C389.0 198.3 391.9 198.2 396.2 198.1C400.5 198.0 405.9 197.2 411.0 197.4C416.1 197.6 421.5 198.7 427.0 199.2C432.5 199.7 438.5 200.0 444.0 200.2C449.5 200.4 454.6 200.4 459.8 200.5C465.0 200.6 469.7 200.5 475.0 200.5C480.3 200.5 486.0 200.8 491.6 200.5C497.2 200.2 503.3 199.2 508.7 198.9C514.1 198.6 518.7 198.4 524.0 198.4C529.3 198.4 534.7 198.7 540.3 198.7C545.9 198.7 552.0 198.7 557.4 198.4C562.8 198.1 567.4 197.2 572.7 196.9C578.0 196.6 583.5 196.4 589.0 196.5C594.5 196.6 600.0 197.2 605.4 197.4C610.8 197.6 616.2 197.1 621.6 197.8C627.0 198.5 632.5 200.5 637.9 201.6C643.3 202.7 648.6 203.1 654.0 204.3C659.4 205.5 664.9 207.7 670.3 208.6C675.7 209.5 681.1 209.6 686.5 210.0C691.9 210.4 697.5 210.7 702.8 211.0C708.1 211.3 713.0 211.5 718.3 211.9C723.6 212.3 729.1 213.1 734.5 213.7C739.9 214.3 745.4 215.4 750.8 215.5C756.2 215.6 761.6 214.6 767.0 214.4C772.4 214.2 777.8 214.5 783.2 214.4C788.6 214.4 794.1 214.4 799.5 214.3C804.9 214.2 810.3 214.2 815.7 214.1C821.1 214.0 826.5 214.0 832.0 213.9C837.5 213.8 844.2 214.0 848.4 213.8C852.6 213.5 854.3 213.0 857.0 212.6C859.7 212.2 860.6 211.8 864.6 211.4C868.6 211.0 876.9 210.6 880.8 210.2C884.7 209.8 885.5 209.4 888.0 209.0C890.5 208.6 892.0 208.1 896.0 207.9C900.0 207.7 906.9 207.7 912.3 207.7C917.7 207.7 923.2 207.6 928.6 207.7C934.0 207.8 942.0 208.2 944.7 208.3" fill="none" stroke="#ff8236" stroke-width="1.25" stroke-opacity="0.85"/>
<path d="M153.2 107.9C156.0 109.4 164.1 114.1 169.5 116.6C174.9 119.1 180.1 120.8 185.4 123.0C190.8 125.2 196.2 127.7 201.6 129.6C206.9 131.5 212.2 132.8 217.5 134.5C222.8 136.2 227.9 138.4 233.2 140.1C238.5 141.8 244.0 143.1 249.4 144.6C254.8 146.1 260.3 147.8 265.7 149.1C271.1 150.4 276.2 151.3 281.9 152.4C287.6 153.5 294.6 154.6 300.0 155.7C305.4 156.8 307.7 157.4 314.4 158.9C321.1 160.4 331.9 162.5 340.0 164.4C348.1 166.3 356.6 168.9 363.3 170.5C370.0 172.1 374.7 173.0 380.2 174.0C385.7 175.0 391.0 175.8 396.2 176.6C401.4 177.3 404.7 177.7 411.4 178.5C418.1 179.3 428.2 180.8 436.3 181.7C444.4 182.6 450.8 183.1 460.0 184.0C469.2 184.9 483.5 186.7 491.6 187.3C499.7 187.9 500.6 187.2 508.7 187.6C516.8 188.0 532.2 189.5 540.3 189.9C548.4 190.3 552.0 190.1 557.4 190.2C562.8 190.2 567.1 190.0 572.7 190.2C578.3 190.3 585.3 190.7 591.0 191.1C596.7 191.5 601.6 192.1 607.0 192.4C612.4 192.7 615.6 192.2 623.4 193.0C631.2 193.8 644.4 195.9 654.0 197.1C663.6 198.3 672.9 199.4 681.0 200.2C689.1 201.0 696.5 201.5 702.8 202.0C709.1 202.5 711.0 202.7 719.0 203.4C727.0 204.2 740.6 205.8 750.8 206.5C761.0 207.2 771.9 207.5 780.0 207.8C788.1 208.1 791.0 208.2 799.5 208.4C808.0 208.6 822.9 208.5 831.0 208.7C839.1 208.9 842.9 209.7 848.4 209.7C853.9 209.7 858.7 209.2 864.0 208.9C869.3 208.6 874.7 208.4 880.0 208.1C885.3 207.8 888.8 207.5 896.0 207.3C903.2 207.1 914.9 206.9 923.0 207.1C931.1 207.3 941.1 208.1 944.7 208.3" fill="none" stroke="#05f5f5" stroke-width="1.25" stroke-opacity="0.85"/>
<circle cx="153" cy="244" r="4" fill="#f8b400"/>
<circle cx="153" cy="238.8" r="4" fill="#8fb2dc"/>
<rect x="953" y="193.3" width="60.5" height="16.4" fill="#ff0000"/>
<text x="1010" y="205.2" font-size="11" fill="#fff" text-anchor="end" stroke="#fff" stroke-width="0.35">18720</text>
<text x="1008.5" y="126.3" font-size="12" fill="#262626" text-anchor="end">19,200</text>
<text x="1008.5" y="193.7" font-size="12" fill="#262626" text-anchor="end">18,800</text>
<text x="1008.5" y="261" font-size="12" fill="#262626" text-anchor="end">18,400</text>
<text x="1008.5" y="303.7" font-size="12" fill="#262626" text-anchor="end">20</text>
<text x="1008.5" y="324.6" font-size="12" fill="#262626" text-anchor="end">-60</text>
<text x="1008.5" y="348.9" font-size="12" fill="#262626" text-anchor="end">-140</text>
<text x="1008.5" y="381.9" font-size="12" fill="#262626" text-anchor="end">70</text>
<text x="1008.5" y="404" font-size="12" fill="#262626" text-anchor="end">30</text>
<text x="1008.5" y="448.6" font-size="12" fill="#262626" text-anchor="end">600,000</text>
<text x="1008.5" y="470.6" font-size="12" fill="#262626" text-anchor="end">300,000</text>
<text x="1008.5" y="492.6" font-size="12" fill="#262626" text-anchor="end">0</text>
<text x="169.4" y="282" font-size="12" fill="#262626" text-anchor="middle">09:10</text>
<text x="217.9" y="282" font-size="12" fill="#262626" text-anchor="middle">09:25</text>
<text x="266.3" y="282" font-size="12" fill="#262626" text-anchor="middle">09:40</text>
<text x="314.8" y="282" font-size="12" fill="#262626" text-anchor="middle">09:55</text>
<text x="363.2" y="282" font-size="12" fill="#262626" text-anchor="middle">10:10</text>
<text x="411.7" y="282" font-size="12" fill="#262626" text-anchor="middle">10:25</text>
<text x="460.2" y="282" font-size="12" fill="#262626" text-anchor="middle">10:40</text>
<text x="508.6" y="282" font-size="12" fill="#262626" text-anchor="middle">10:55</text>
<text x="557.1" y="282" font-size="12" fill="#262626" text-anchor="middle">11:10</text>
<text x="605.5" y="282" font-size="12" fill="#262626" text-anchor="middle">11:25</text>
<text x="654.0" y="282" font-size="12" fill="#262626" text-anchor="middle">12:35</text>
<text x="702.5" y="282" font-size="12" fill="#262626" text-anchor="middle">12:50</text>
<text x="750.9" y="282" font-size="12" fill="#262626" text-anchor="middle">13:05</text>
<text x="799.4" y="282" font-size="12" fill="#262626" text-anchor="middle">13:20</text>
<text x="847.8" y="282" font-size="12" fill="#262626" text-anchor="middle">13:35</text>
<text x="896.3" y="282" font-size="12" fill="#262626" text-anchor="middle">13:50</text>
<text x="944.8" y="282" font-size="12" fill="#262626" text-anchor="middle">14:05</text>
<rect x="153" y="95.2" width="58" height="17.4" fill="#000" fill-opacity="0.32"/>
<rect x="153" y="304" width="43.5" height="17.4" fill="#000" fill-opacity="0.32"/>
<rect x="153" y="371.8" width="50.5" height="17.4" fill="#000" fill-opacity="0.32"/>
<rect x="153.5" y="439.8" width="44.5" height="17.4" fill="#000" fill-opacity="0.32"/>
<text x="154" y="107.60000000000001" font-size="14" fill="#fff">ローソク</text>
<text x="222" y="107.60000000000001" font-size="14" fill="#fff">指数平滑(9)</text>
<text x="306.2" y="107.60000000000001" font-size="14" fill="#fff">指数平滑(21)</text>
<text x="398.3" y="107.60000000000001" font-size="14" fill="#fff">指数平滑(75)</text>
<text x="154" y="316.4" font-size="14" fill="#fff">MACD</text>
<text x="208" y="316.4" font-size="14" fill="#fff">MACD(12,26)</text>
<text x="304" y="316.4" font-size="14" fill="#fff">シグナル(9)</text>
<text x="154" y="384.2" font-size="14" fill="#fff">RSI(14)</text>
<text x="154.5" y="452.2" font-size="14" fill="#fff">出来高</text>
</svg>
</body></html>
